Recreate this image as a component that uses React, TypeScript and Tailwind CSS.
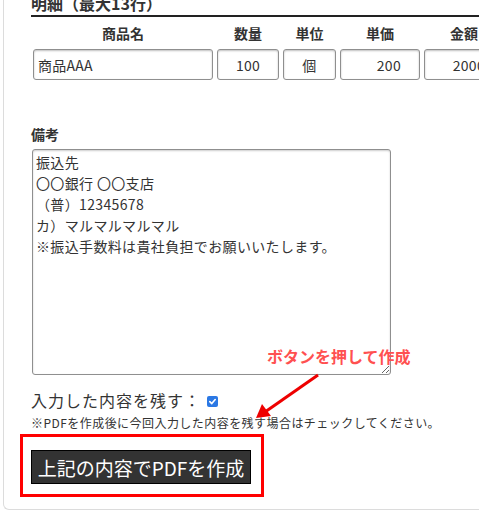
import React from 'react';

const cols = [
  { label: '商品名', value: '商品AAA', w: 'w-[180px]', align: 'text-left pl-[4px]' },
  { label: '数量', value: '100', w: 'w-[62px]', align: 'text-center' },
  { label: '単位', value: '個', w: 'w-[53px]', align: 'text-center' },
  { label: '単価', value: '200', w: 'w-[80px]', align: 'text-right pr-[18px]' },
  { label: '金額', value: '2000', w: 'w-[80px]', align: 'text-right pr-[18px]' },
];

const memo = `振込先
〇〇銀行 〇〇支店
（普）12345678
カ）マルマルマルマル
※振込手数料は貴社負担でお願いいたします。`;

export default function App() {
  return (
    <div className="relative w-[479px] h-[513px] overflow-hidden bg-white text-[#333] font-['Noto_Sans_CJK_JP','Liberation_Sans',sans-serif]">
      <div className="ml-[3px] -mt-[9px] w-[620px] border-l border-b border-[#dcdcdc] rounded-bl-[6px] pl-[27px] pb-[12px]">
        {/* 明細 */}
        <h2 className="text-[16px] font-bold leading-[24px] border-b-2 border-[#222]">明細（最大13行）</h2>

        <div className="flex gap-[4px] pl-[2px] mt-[6px]">
          {cols.map((c) => (
            <div key={c.label} className={`${c.w} text-center text-[14px] font-bold leading-[20px]`}>
              {c.label}
            </div>
          ))}
        </div>
        <div className="flex gap-[4px] pl-[2px] mt-[6px]">
          {cols.map((c) => (
            <input
              key={c.label}
              readOnly
              value={c.value}
              className={`${c.w} ${c.align} h-[31px] text-[14px] tracking-[0.3px] text-[#333] border border-[#8f8f8f] rounded-[3px] shadow-[inset_0_1px_2px_rgba(0,0,0,0.25)] outline-none`}
            />
          ))}
        </div>

        {/* 備考 */}
        <div className="mt-[44px] text-[14px] font-bold leading-[20px]">備考</div>
        <textarea
          readOnly
          defaultValue={memo}
          className="block mt-[5px] ml-[1px] w-[359px] h-[226px] px-[3px] pt-[2px] text-[14px] leading-[21px] tracking-[0.35px] text-[#333] border border-[#8f8f8f] rounded-[3px] shadow-[inset_0_1px_2px_rgba(0,0,0,0.2)] outline-none"
        />

        <div className="mt-[13px] flex items-center gap-[6px] text-[16px] leading-[24px] tracking-[1px]">
          <span>入力した内容を残す：</span>
          <span className="w-[11px] h-[11px] rounded-[2px] bg-[#2b78e4] flex items-center justify-center mt-[2px]">
            <svg width="9" height="9" viewBox="0 0 10 10">
              <path d="M2 5.2 L4.2 7.3 L8 2.8" fill="none" stroke="white" strokeWidth="1.8" strokeLinecap="round" strokeLinejoin="round" />
            </svg>
          </span>
        </div>
        <div className="mt-[2px] text-[12px] leading-[18px] tracking-[0.45px]">
          ※PDFを作成後に今回入力した内容を残す場合はチェックしてください。
        </div>

        <div className="mt-[2px] -ml-[11px] w-fit border-[3px] border-[#ff0000] pl-[8px] pr-[10px] pt-[13px] pb-[10px]">
          <button className="w-[220px] h-[34px] bg-[#333] border border-black text-white text-[19px] leading-none">
            上記の内容でPDFを作成
          </button>
        </div>
      </div>

      {/* annotation */}
      <div className="absolute left-[267px] top-[346px] text-[16px] font-bold leading-[20px] text-[#ff5050]">
        ボタンを押して作成
      </div>
      <svg className="absolute left-0 top-0" width="479" height="513" viewBox="0 0 479 513">
        <line x1="318" y1="375" x2="265" y2="412" stroke="#ee0000" strokeWidth="3" />
        <polygon points="256,418 262,404 271,416" fill="#ee0000" />
      </svg>
    </div>
  );
}
